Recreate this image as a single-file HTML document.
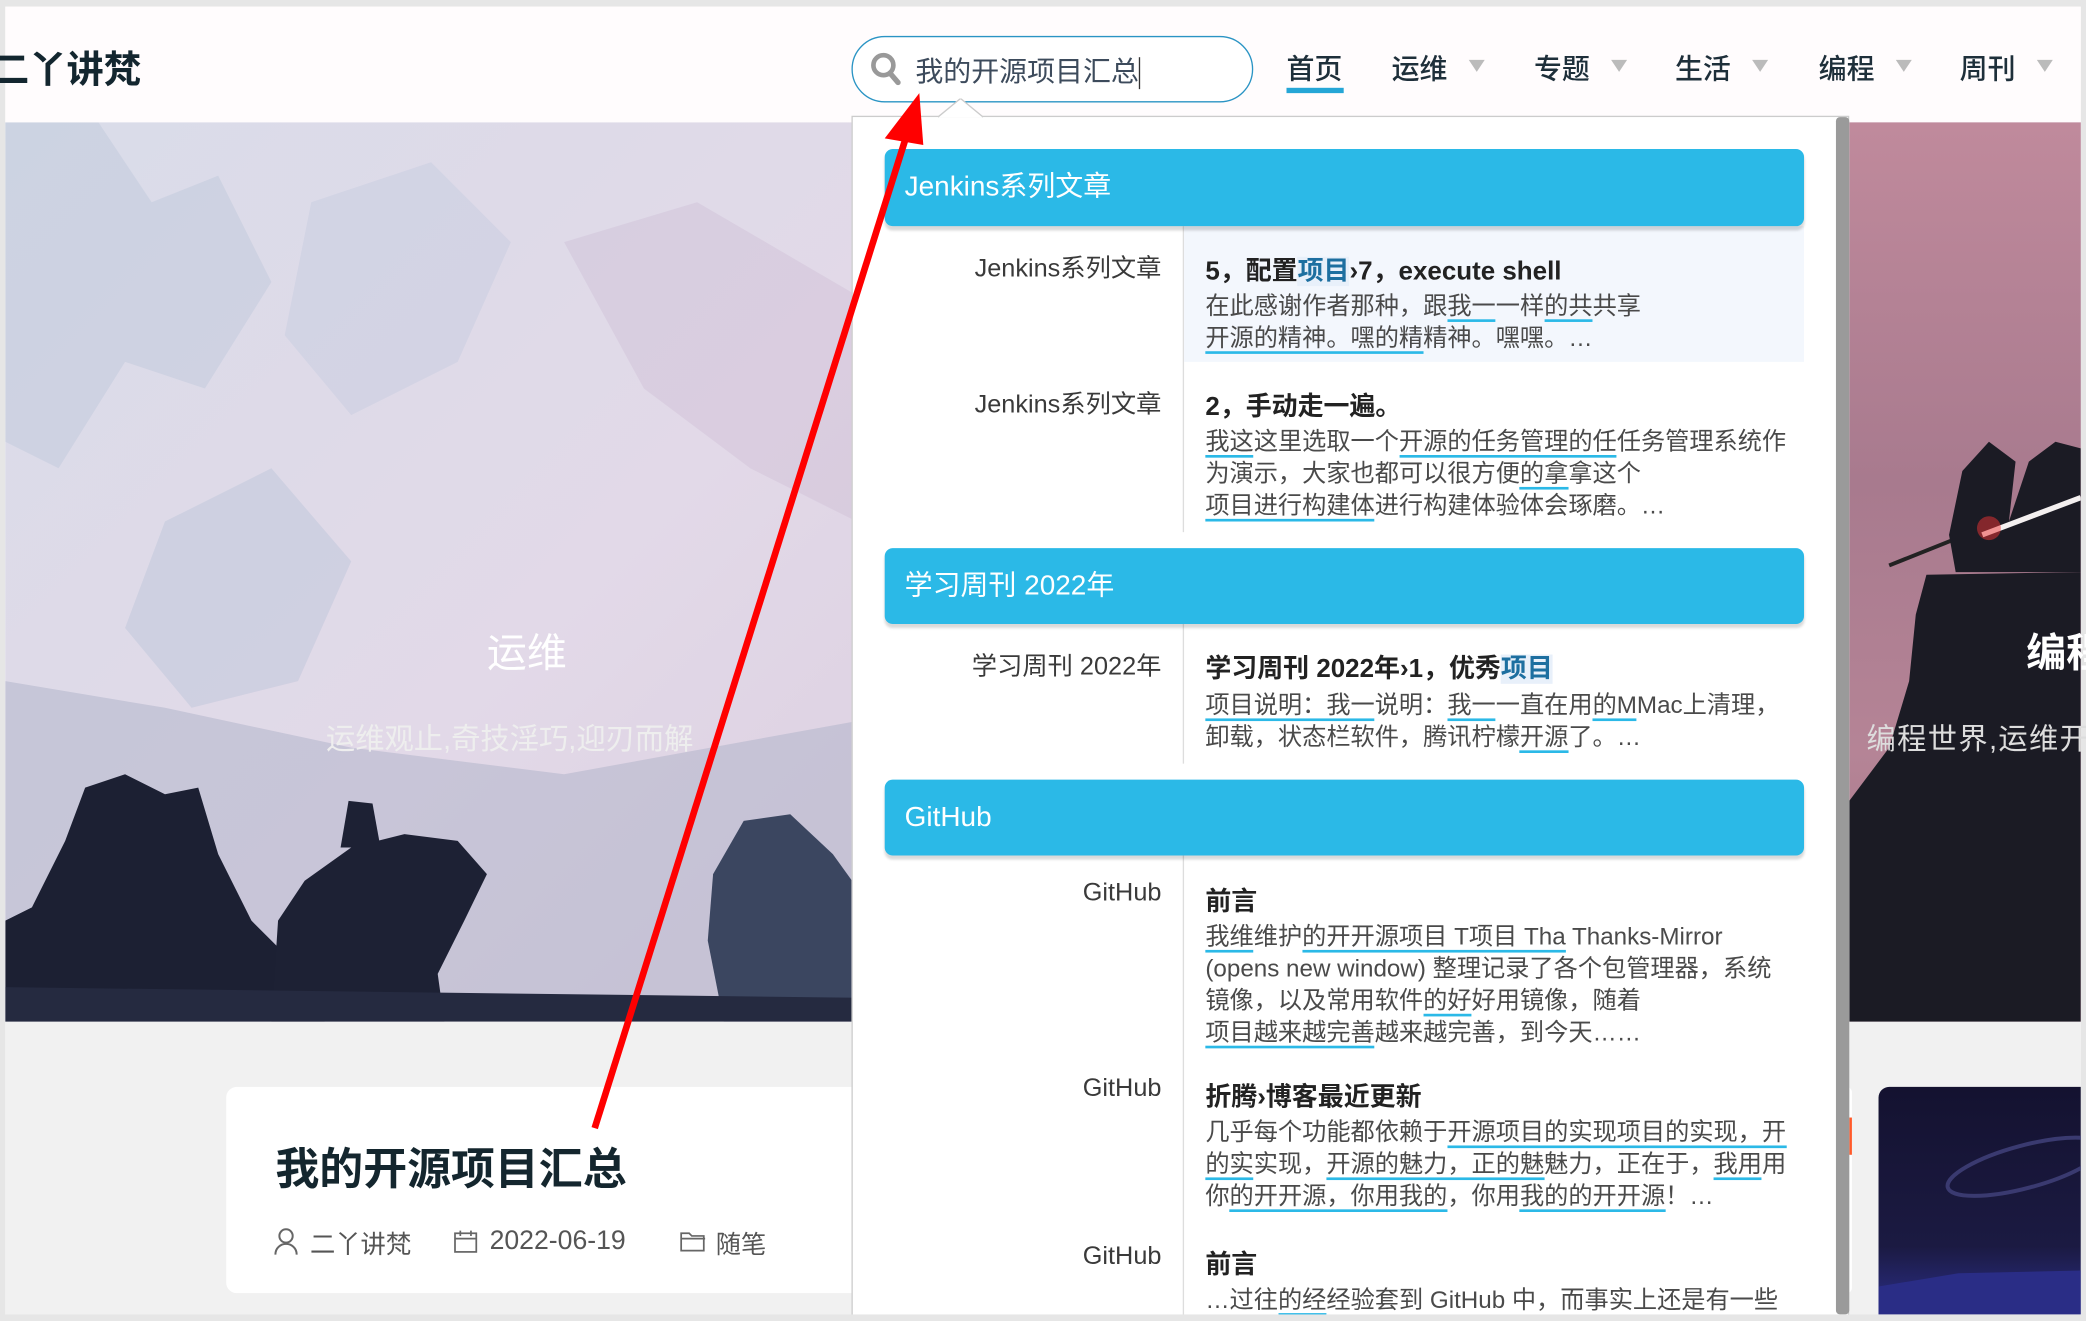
<!DOCTYPE html>
<html><head><meta charset="utf-8">
<style>
*{margin:0;padding:0;box-sizing:border-box}
html,body{width:2086px;height:1320px;overflow:hidden;background:#fff}
#w{position:absolute;left:0;top:0;width:1568px;height:993px;transform:scale(1.3304);transform-origin:0 0;font-family:"Liberation Sans","Noto Sans CJK SC",sans-serif;background:#fff;overflow:hidden}
.a{position:absolute;white-space:nowrap}
.nav{font-size:21px;color:#1e2f3a;font-weight:500}
.tri{position:absolute;width:0;height:0;border-left:6px solid transparent;border-right:6px solid transparent;border-top:9px solid #bbb}
.hd{position:absolute;left:665px;width:691px;background:#2bb9e7;border-radius:6px;box-shadow:0 3px 2px rgba(0,0,0,.15);color:#fff;font-size:21px;padding-left:15px}
.lab{position:absolute;right:695px;font-size:19px;color:#3a3a3a;text-align:right}
.t{position:absolute;left:906px;font-size:19.5px;font-weight:bold;color:#222;white-space:nowrap}
.p{position:absolute;left:906px;font-size:18.2px;color:#4a4a4a;line-height:24px;white-space:nowrap}
.u{border-bottom:2px solid #2bb9e7}
.hl{color:#1d6fa0;background:#e8f0fa}
</style></head><body><div id="w">
<div class="a" style="left:0;top:0;width:1568px;height:5px;background:#e6e6e6"></div>
<div class="a" style="left:1564px;top:0;width:4px;height:993px;background:#e6e6e6"></div>
<div class="a" style="left:0;top:0;width:4px;height:993px;background:#e6e6e6"></div>
<div class="a" style="left:4px;top:5px;width:1560px;height:87px;background:#fffcfd"></div>
<div class="a" style="left:-6px;top:31px;font-size:28px;font-weight:bold;color:#13262f">二丫讲梵</div>
<div class="a" style="left:640px;top:27px;width:302px;height:50px;border:1.5px solid #2a94c4;border-radius:25px;background:#fff"></div>
<svg class="a" style="left:653px;top:38px" width="26" height="28" viewBox="0 0 26 28"><circle cx="11" cy="11" r="7.5" fill="none" stroke="#999" stroke-width="3.5"/><path d="M16 17l6 7" stroke="#999" stroke-width="4" stroke-linecap="round"/></svg>
<div class="a" style="left:688px;top:38px;font-size:21px;color:#3d4b5c">我的开源项目汇总<span style="display:inline-block;width:1px;height:24px;background:#333;vertical-align:middle"></span></div>
<div class="a nav" style="left:967px;top:36px">首页</div>
<div class="a" style="left:967px;top:66px;width:43px;height:4px;background:#25a6d6"></div>
<div class="a nav" style="left:1046px;top:36px">运维</div><div class="tri" style="left:1104px;top:45px"></div>
<div class="a nav" style="left:1153px;top:36px">专题</div><div class="tri" style="left:1211px;top:45px"></div>
<div class="a nav" style="left:1259px;top:36px">生活</div><div class="tri" style="left:1317px;top:45px"></div>
<div class="a nav" style="left:1367px;top:36px">编程</div><div class="tri" style="left:1425px;top:45px"></div>
<div class="a nav" style="left:1473px;top:36px">周刊</div><div class="tri" style="left:1531px;top:45px"></div>
<div class="a" style="left:4px;top:92px;width:1560px;height:676px;background:linear-gradient(135deg,#d9dce9 0%,#e2d9e8 35%,#dccfe0 60%,#cdbcd0 100%)"></div>
<svg class="a" style="left:4px;top:92px" width="640" height="676" viewBox="0 0 640 676">
<path d="M0 0L70 0 110 60 160 40 200 120 150 200 90 180 40 260 0 240Z" fill="#b4c2d8" opacity=".35"/>
<path d="M230 60L320 30 380 90 340 180 260 220 210 160Z" fill="#b9c3da" opacity=".3"/>
<path d="M420 90L520 60 640 130 640 300 560 260 480 200Z" fill="#c8b3cc" opacity=".3"/>
<path d="M120 300L200 260 260 330 220 420 140 440 90 380Z" fill="#a9b8d0" opacity=".3"/>
<path d="M0 420L120 440 260 470 420 490 640 450 640 676 0 676Z" fill="#aeb2c8" opacity=".5"/>
<path d="M0 600L20 590 45 540 60 500 90 490 120 505 145 500 160 550 185 600 215 630 240 676 0 676Z" fill="#1c2033"/>
<path d="M200 676L205 600 225 570 260 545 300 535 340 540 362 565 345 600 325 640 330 676Z" fill="#1d2134"/>
<path d="M252 545L258 510 276 512 282 545Z" fill="#1d2134"/>
<path d="M540 676L528 615 532 565 555 525 590 520 622 550 640 575 640 676Z" fill="#3b4660"/>
<path d="M0 650L640 658 640 676 0 676Z" fill="#252a40"/>
</svg>
<div class="a" style="left:366px;top:466px;font-size:30px;color:#fff">运维</div>
<div class="a" style="left:245px;top:538px;font-size:22px;color:#eee">运维观止,奇技淫巧,迎刃而解</div>
<div class="a" style="left:1390px;top:92px;width:174px;height:676px;background:linear-gradient(180deg,#c08a9c 0%,#a87a8e 40%,#b58496 70%,#a07585 100%)"></div>
<svg class="a" style="left:1390px;top:92px" width="174" height="676" viewBox="0 0 174 676">
<path d="M30 333L100 305" stroke="#222" stroke-width="3"/>
<path d="M80 338L75 310 85 262 105 240 125 255 120 300 135 255 155 240 174 245 174 338Z" fill="#1b1b24"/>
<path d="M100 310L174 282" stroke="#f4f0f0" stroke-width="4"/>
<circle cx="105" cy="305" r="9" fill="#e33" opacity=".5"/>
<path d="M58 340L174 338 174 676 0 676 0 510 30 470 45 420 50 370Z" fill="#1b1b24"/>
</svg>
<div class="a" style="left:1523px;top:466px;font-size:30px;color:#fff;font-weight:bold">编程</div>
<div class="a" style="left:1403px;top:538px;font-size:22px;color:#ddd;letter-spacing:1px">编程世界,运维开</div>
<div class="a" style="left:4px;top:768px;width:1560px;height:220px;background:#f1f1f1"></div>
<div class="a" style="left:170px;top:817px;width:490px;height:155px;background:#fff;border-radius:8px"></div>
<div class="a" style="left:207px;top:852px;font-size:33px;font-weight:bold;color:#14262e">我的开源项目汇总</div>
<svg class="a" style="left:205px;top:922px" width="20" height="22" viewBox="0 0 20 22"><circle cx="10" cy="7" r="5" fill="none" stroke="#666" stroke-width="1.5"/><path d="M2 21c0-5 4-8 8-8s8 3 8 8" fill="none" stroke="#666" stroke-width="1.5"/></svg>
<div class="a" style="left:233px;top:921px;font-size:19px;color:#555">二丫讲梵</div>
<svg class="a" style="left:341px;top:924px" width="18" height="18" viewBox="0 0 18 18"><rect x="1" y="3" width="16" height="14" fill="none" stroke="#666" stroke-width="1.3"/><path d="M1 7h16M5 1v4M13 1v4" stroke="#666" stroke-width="1.3"/></svg>
<div class="a" style="left:368px;top:922px;font-size:20px;color:#555">2022-06-19</div>
<svg class="a" style="left:511px;top:925px" width="20" height="16" viewBox="0 0 20 16"><path d="M1 2h6l2 2h9v11H1Z M1 6h18" fill="none" stroke="#666" stroke-width="1.3"/></svg>
<div class="a" style="left:538px;top:921px;font-size:19px;color:#555">随笔</div>
<div class="a" style="left:1380px;top:817px;width:12px;height:155px;background:#fff;border-radius:4px"></div>
<div class="a" style="left:1388px;top:840px;width:4px;height:28px;background:#ff5a2a"></div>
<div class="a" style="left:1412px;top:817px;width:152px;height:171px;background:linear-gradient(180deg,#141230 0%,#1b1a42 70%,#2c2f8a 100%);border-radius:8px 0 0 0"></div>
<svg class="a" style="left:1412px;top:817px" width="152" height="171"><ellipse cx="110" cy="60" rx="60" ry="16" fill="none" stroke="#3a3a70" stroke-width="3" transform="rotate(-15 110 60)"/><path d="M0 150L60 140 152 138 152 171 0 171Z" fill="#2a2d86"/></svg>
<div class="a" style="left:640px;top:87px;width:750px;height:905px;background:#fff;border:1px solid #ccc"></div>
<svg class="a" style="left:705px;top:74px" width="34" height="15"><path d="M0 14L17 0 34 14" fill="#fff" stroke="#ccc" stroke-width="1"/></svg>
<div class="a" style="left:1380px;top:88px;width:10px;height:900px;background:#9a9a9a;border-radius:3px"></div>
<div class="a" style="left:889px;top:170px;width:1px;height:230px;background:#ddd"></div>
<div class="a" style="left:889px;top:469px;width:1px;height:105px;background:#ddd"></div>
<div class="a" style="left:889px;top:643px;width:1px;height:350px;background:#ddd"></div>
<div class="a" style="left:890px;top:170px;width:466px;height:102px;background:#f3f7fd"></div>
<div class="hd" style="top:112px;height:58px;line-height:58px">Jenkins系列文章</div>
<div class="lab" style="top:187px">Jenkins系列文章</div>
<div class="t" style="top:187px">5，配置<span class="hl">项目</span>›7，execute shell</div>
<div class="p" style="top:218px">在此感谢作者那种，跟<span class="u">我一</span>一样<span class="u">的共</span>共享<br><span class="u">开源的精神。嘿的精</span>精神。嘿嘿。…</div>
<div class="lab" style="top:289px">Jenkins系列文章</div>
<div class="t" style="top:289px">2，手动走一遍。</div>
<div class="p" style="top:320px"><span class="u">我这</span>这里选取一个<span class="u">开源的任务管理的任</span>任务管理系统作<br>为演示，大家也都可以很方便<span class="u">的拿</span>拿这个<br><span class="u">项目进行构建体</span>进行构建体验体会琢磨。…</div>
<div class="hd" style="top:412px;height:57px;line-height:57px">学习周刊 2022年</div>
<div class="lab" style="top:486px">学习周刊 2022年</div>
<div class="t" style="top:486px">学习周刊 2022年›1，优秀<span class="hl">项目</span></div>
<div class="p" style="top:518px"><span class="u">项目说明：我一</span>说明：<span class="u">我一</span>一直在用<span class="u">的M</span>Mac上清理，<br>卸载，状态栏软件，腾讯柠檬<span class="u">开源</span>了。…</div>
<div class="hd" style="top:586px;height:57px;line-height:57px">GitHub</div>
<div class="lab" style="top:661px">GitHub</div>
<div class="t" style="top:661px">前言</div>
<div class="p" style="top:692px"><span class="u">我维</span>维护<span class="u">的开开源项目 T项目 Tha</span> Thanks-Mirror<br>(opens new window) 整理记录了各个包管理器，系统<br>镜像，以及常用软件<span class="u">的好</span>好用镜像，随着<br><span class="u">项目越来越完善</span>越来越完善，到今天……</div>
<div class="lab" style="top:808px">GitHub</div>
<div class="t" style="top:808px">折腾›博客最近更新</div>
<div class="p" style="top:839px">几乎每个功能都依赖于<span class="u">开源项目的实现项目的实现，开</span><br><span class="u">的实</span>实现，<span class="u">开源的魅力，正的魅</span>魅力，正在于，<span class="u">我用</span>用<br>你<span class="u">的开开源，你用我的</span>，你用<span class="u">我的的开开源</span>！…</div>
<div class="lab" style="top:934px">GitHub</div>
<div class="t" style="top:934px">前言</div>
<div class="p" style="top:965px">…过往<span class="u">的经</span>经验套到 GitHub 中，而事实上还是有一些</div>
<div class="a" style="left:0;top:988px;width:1568px;height:5px;background:#e6e6e6"></div>
<svg class="a" style="left:0;top:0" width="1568" height="993"><path d="M447 848L682 100" stroke="#f00" stroke-width="5" fill="none"/><path d="M665 104L691 70 694 109Z" fill="#f00"/></svg>
</div></body></html>
